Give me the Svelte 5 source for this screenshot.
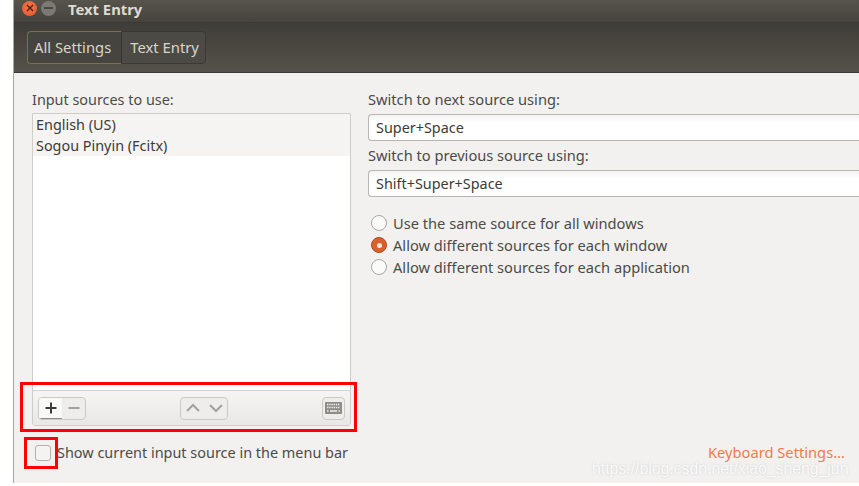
<script lang="ts">
	const sources = ['English (US)', 'Sogou Pinyin (Fcitx)'];
	const modes = [
		{ label: 'Use the same source for all windows', on: false },
		{ label: 'Allow different sources for each window', on: true },
		{ label: 'Allow different sources for each application', on: false }
	];
</script>

<div class="screen">
	<div class="window">
		<header class="titlebar">
			<span class="wm close">
				<svg width="8" height="8" viewBox="0 0 8 8"><path d="M1 1l6 6M7 1l-6 6" stroke="#4a2012" stroke-width="1.4" /></svg>
			</span>
			<span class="wm min"><i></i></span>
			<span class="title">Text Entry</span>
		</header>
		<div class="toolbar">
			<div class="crumbs">
				<span class="crumb active">All Settings</span>
				<span class="crumb">Text Entry</span>
			</div>
		</div>
		<main class="content">
			<section class="left">
				<div class="label">Input sources to use:</div>
				<div class="list">
					<div class="rows">
						{#each sources as source}
							<div class="row">{source}</div>
						{/each}
					</div>
					<div class="list-tools">
						<div class="btn-group">
							<span class="tool plus">
								<svg width="12" height="12" viewBox="0 0 12 12"><path d="M6 .5v11M.5 6h11" stroke="#3c3c3c" stroke-width="2" /></svg>
							</span>
							<span class="tool minus">
								<svg width="12" height="12" viewBox="0 0 12 12"><path d="M.5 6h11" stroke="#a3a19c" stroke-width="2" /></svg>
							</span>
						</div>
						<div class="btn-group">
							<span class="tool">
								<svg width="14" height="10" viewBox="0 0 14 10"><path d="M1 8l6-6 6 6" fill="none" stroke="#a3a19c" stroke-width="2" /></svg>
							</span>
							<span class="tool">
								<svg width="14" height="10" viewBox="0 0 14 10"><path d="M1 2l6 6 6-6" fill="none" stroke="#a3a19c" stroke-width="2" /></svg>
							</span>
						</div>
						<div class="btn-group">
							<span class="tool kbd">
								<svg width="17" height="12" viewBox="0 0 17 12">
									<rect width="17" height="12" rx="1" fill="#8e8c87" />
									<path d="M2 2.5h13M2 5.5h13" stroke="#f0efee" stroke-width="1.3" stroke-dasharray="1.4 .8" />
									<path d="M2 9h1.5M5 9h7M13.5 9h1.5" stroke="#f0efee" stroke-width="1.3" />
								</svg>
							</span>
						</div>
					</div>
				</div>
			</section>
			<section class="right">
				<div class="label">Switch to next source using:</div>
				<div class="field">Super+Space</div>
				<div class="label second">Switch to previous source using:</div>
				<div class="field">Shift+Super+Space</div>
				<div class="radios">
					{#each modes as mode}
						<div class="radio-row">
							<span class="radio" class:on={mode.on}></span>
							<span>{mode.label}</span>
						</div>
					{/each}
				</div>
			</section>
			<footer class="foot">
				<div class="show">
					<span class="check"></span>
					<span>Show current input source in the menu bar</span>
				</div>
				<span class="link">Keyboard Settings...</span>
			</footer>
		</main>
	</div>

	<!-- annotations drawn over the screenshot -->
	<div class="mark mark-tools"></div>
	<div class="mark mark-check"></div>
	<div class="watermark">https://blog.csdn.net/xiao_sheng_jun</div>
</div>

<style>
	:global(body) {
		margin: 0;
		background: #fff;
	}

	.screen {
		position: relative;
		width: 859px;
		height: 486px;
		overflow: hidden;
		font-family: 'Noto Sans', 'Open Sans', sans-serif;
		font-size: 14px;
		color: #3c3b37;
	}

	.window {
		margin-left: 13px;
		height: 483px;
		display: flex;
		flex-direction: column;
		border-left: 1px solid #a9a7a3;
		background: #f2f1f0;
	}

	.titlebar {
		height: 23px;
		flex-shrink: 0;
		display: flex;
		align-items: center;
		padding-left: 8px;
		background: linear-gradient(#57544c, #45433d);
		border-bottom: 1px solid #3c3a35;
		box-sizing: border-box;
	}

	.wm {
		width: 15px;
		height: 15px;
		border-radius: 50%;
		display: flex;
		align-items: center;
		justify-content: center;
		margin-top: -6px;
	}

	.close {
		background: radial-gradient(circle at 50% 40%, #f6794a, #e2522a);
	}

	.min {
		margin-left: 4px;
		background: #7a7973;
	}

	.min i {
		width: 9px;
		height: 2px;
		background: #4a4944;
	}

	.title {
		margin-left: 12px;
		margin-top: -4px;
		line-height: 16px;
		font-weight: 700;
		font-size: 14.8px;
		color: #dfdbd2;
	}

	.toolbar {
		height: 50px;
		flex-shrink: 0;
		box-sizing: border-box;
		padding-top: 8px;
		padding-left: 13px;
		background: linear-gradient(#3f3d38, #55524a);
		border-bottom: 1px solid #3a3934;
	}

	.crumbs {
		display: inline-flex;
		height: 33px;
		border: 1px solid #3a3934;
		border-radius: 4px;
		background: #4b4a44;
		box-sizing: border-box;
		color: #d9d5cc;
	}

	.crumb {
		display: flex;
		align-items: center;
		padding: 0 6px 2px 8px;
		font-size: 14.8px;
	}

	.crumb.active {
		border: 1px solid #8d6550;
		border-radius: 4px 0 0 4px;
		margin: -1px 0 -1px -1px;
		padding: 0 10px 2px 6px;
		background: #45443e;
		border-right: 1px solid #34332e;
	}

	.content {
		flex: 1;
		display: grid;
		grid-template-columns: 319px 1fr;
		grid-template-rows: 1fr auto;
		column-gap: 17px;
		padding: 18px 0 21px 18px;
		min-height: 0;
	}

	.label {
		font-size: 14.4px;
		line-height: 18px;
		color: #4c4b47;
		margin-bottom: 4px;
	}

	.list {
		width: 319px;
		height: 313px;
		display: flex;
		flex-direction: column;
		box-sizing: border-box;
		border: 1px solid #cfcdca;
		border-radius: 0 0 3px 3px;
		background: #fff;
	}

	.rows {
		flex: 1;
	}

	.row {
		height: 21px;
		line-height: 21px;
		padding-left: 3px;
		background: #f5f4f3;
		font-size: 14.4px;
	}

	.list-tools {
		height: 35px;
		display: flex;
		align-items: center;
		justify-content: space-between;
		box-sizing: border-box;
		padding: 0 5px;
		border-top: 1px solid #d3d1ce;
		background: linear-gradient(#f6f5f4, #e9e8e6);
	}

	.btn-group {
		display: flex;
		border: 1px solid #cbc9c5;
		border-radius: 4px;
		background: #eeedeb;
		overflow: hidden;
	}

	.tool {
		width: 23px;
		height: 21px;
		display: flex;
		align-items: center;
		justify-content: center;
	}

	.plus {
		background: #f9f9f8;
		border-bottom: 1px solid #8f8d89;
		height: 20px;
	}

	.kbd {
		width: 21px;
	}

	.right {
		min-width: 0;
		margin-top: -1px;
	}

	.right .label {
		font-size: 14.65px;
		margin-bottom: 6px;
	}

	.right .label.second {
		margin-top: 5px;
	}

	.field {
		height: 27px;
		line-height: 25px;
		box-sizing: border-box;
		border: 1px solid #b8b6b2;
		border-right: none;
		border-radius: 4px 0 0 4px;
		padding-left: 7px;
		background: linear-gradient(#f4f3f2, #fff 30%);
		font-size: 14.4px;
		color: #3c3b37;
	}

	.radios {
		margin-top: 15px;
		margin-left: 3px;
		display: flex;
		flex-direction: column;
	}

	.radio-row {
		height: 22px;
		display: flex;
		align-items: center;
		gap: 6px;
		color: #4c4b47;
		font-size: 14.65px;
	}

	.radio {
		width: 14px;
		height: 14px;
		border-radius: 50%;
		border: 1px solid #aaa8a4;
		background: #fbfbfa;
		display: flex;
		align-items: center;
		justify-content: center;
	}

	.radio.on {
		border-color: #a84a22;
		background: #d9622c;
	}

	.radio.on::after {
		content: '';
		width: 5px;
		height: 5px;
		border-radius: 50%;
		background: #f8e6dc;
	}

	.foot {
		grid-column: 1 / -1;
		display: flex;
		justify-content: space-between;
		align-items: center;
		margin-top: 16px;
		padding-right: 14px;
	}

	.show {
		display: flex;
		align-items: center;
		gap: 6px;
		margin-left: 3px;
		color: #4c4b47;
		font-size: 14.45px;
	}

	.check {
		width: 14px;
		height: 14px;
		border: 1px solid #b3b1ad;
		border-radius: 3px;
		background: #f4f3f2;
	}

	.link {
		color: #f4794b;
		font-size: 14.7px;
		line-height: 16px;
		margin-bottom: 2px;
	}

	.mark {
		position: absolute;
		box-sizing: border-box;
		border: 3px solid #f00;
	}

	.mark-tools {
		left: 20px;
		top: 382px;
		width: 337px;
		height: 50px;
	}

	.mark-check {
		left: 24px;
		top: 437px;
		width: 34px;
		height: 32px;
	}

	.watermark {
		position: absolute;
		left: 592px;
		top: 461px;
		line-height: 16px;
		font-family: 'Liberation Sans', sans-serif;
		font-size: 15.8px;
		color: rgba(255, 255, 255, 0.85);
		text-shadow: 0 0 2px rgba(180, 180, 180, 0.6);
	}
</style>
